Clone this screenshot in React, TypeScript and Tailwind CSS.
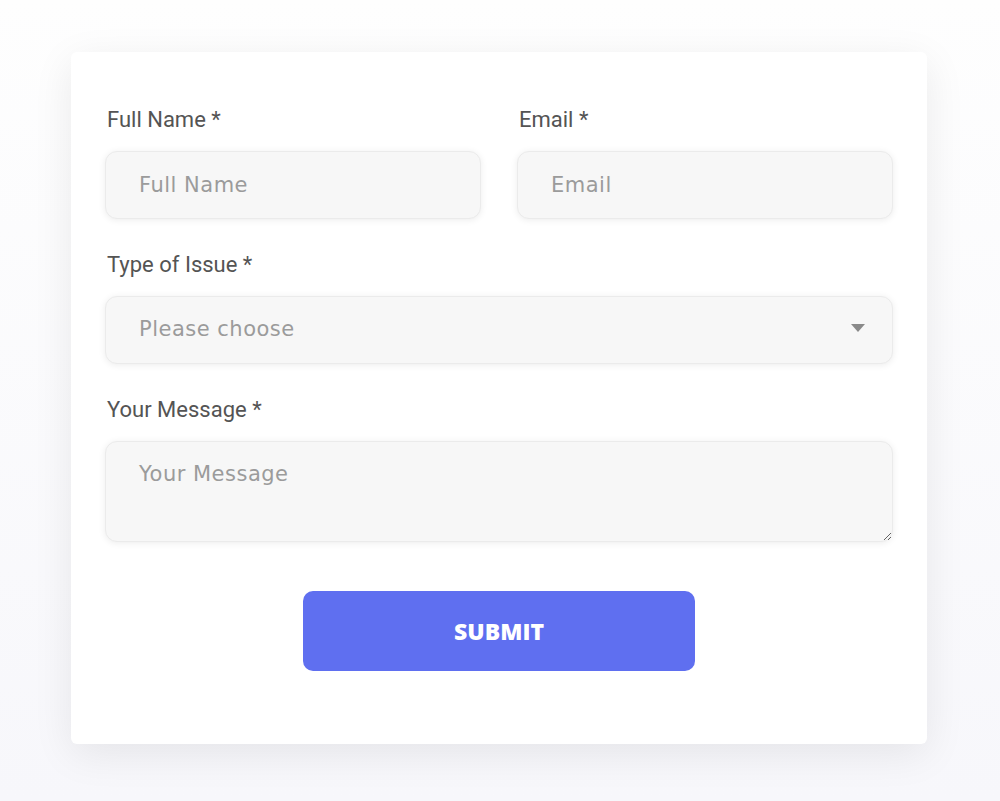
import React from 'react';

const labelCls = "block pl-[2px] text-[22px] leading-6 text-[#545454] mb-[19px]";
const fieldCls =
  "w-full rounded-xl border border-[#ebebeb] bg-[#f7f7f7] px-[33px] text-[21px] tracking-[0.5px] placeholder:text-[#9b9b9b] shadow-[0_1px_7px_rgba(0,0,0,0.08)] outline-none";
const fieldFont = { fontFamily: '"DejaVu Sans", "Open Sans", sans-serif' };

const App = () => {
  return (
    <div
      className="min-h-[801px] w-full bg-gradient-to-b from-[#fefefe] to-[#f7f7fb] pt-[52px]"
      style={{ fontFamily: 'Roboto, "Liberation Sans", sans-serif' }}
    >
      <form
        className="ml-[71px] w-[856px] h-[692px] rounded-md bg-white px-[34px] pt-[56px] shadow-[0_10px_40px_rgba(0,0,0,0.08)]"
        onSubmit={(e) => e.preventDefault()}
      >
        <div className="grid grid-cols-2 gap-x-9">
          <div>
            <label className={labelCls}>Full Name *</label>
            <input className={`${fieldCls} h-[68px] text-[#555]`} placeholder="Full Name" style={fieldFont} />
          </div>
          <div>
            <label className={labelCls}>Email *</label>
            <input className={`${fieldCls} h-[68px] text-[#555]`} placeholder="Email" style={fieldFont} />
          </div>
        </div>

        <div className="mt-[34px]">
          <label className={labelCls}>Type of Issue *</label>
          <div className="relative">
            <select defaultValue="" className={`${fieldCls} h-[68px] appearance-none text-[#9b9b9b]`} style={fieldFont}>
              <option value="" disabled>
                Please choose
              </option>
              <option>Billing</option>
              <option>Technical</option>
              <option>Other</option>
            </select>
            <svg
              className="pointer-events-none absolute right-[28px] top-[28px]"
              width="14"
              height="8"
              viewBox="0 0 14 8"
            >
              <path d="M0 0h14L7 8z" fill="#8a8a8a" />
            </svg>
          </div>
        </div>

        <div className="mt-[34px]">
          <label className={labelCls}>Your Message *</label>
          <textarea
            className={`${fieldCls} block h-[101px] py-[20px] leading-6 text-[#555]`}
            placeholder="Your Message"
            style={fieldFont}
          />
        </div>

        <div className="mt-[49px] flex justify-center">
          <button
            type="submit"
            className="h-20 w-[392px] rounded-[10px] bg-[#5f6ff0] text-[23px] font-extrabold text-white"
            style={{ fontFamily: '"Open Sans", sans-serif' }}
          >
            SUBMIT
          </button>
        </div>
      </form>
    </div>
  );
};

export default App;
